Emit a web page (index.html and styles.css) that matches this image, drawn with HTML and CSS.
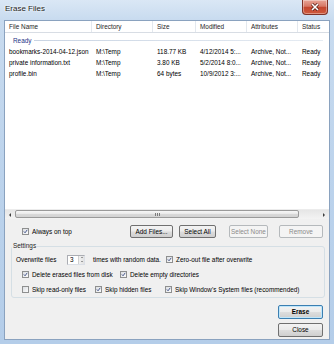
FILE: index.html
```html
<!DOCTYPE html>
<html lang="en">
<head>
    <meta charset="UTF-8">
    <title>Erase Files</title>
    <link rel="stylesheet" href="styles.css">
</head>
<body>
    <div class="window">
        <div class="titlebar">
            <span class="title">Erase Files</span>
            <span class="close-btn">
                <svg width="10" height="8" viewBox="0 0 10 8">
                    <path d="M2 1 L8 7 M8 1 L2 7" stroke="#5a1d14" stroke-width="3" fill="none"/>
                    <path d="M2 1 L8 7 M8 1 L2 7" stroke="#fff" stroke-width="1.6" fill="none"/>
                </svg>
            </span>
        </div>

        <div class="client">
            <!-- ファイル一覧 -->
            <div class="listview">
                <div class="lv-header">
                    <div class="col c1">File Name</div>
                    <div class="col c2">Directory</div>
                    <div class="col c3">Size</div>
                    <div class="col c4">Modified</div>
                    <div class="col c5">Attributes</div>
                    <div class="col c6">Status</div>
                </div>
                <div class="lv-body">
                    <div class="group"><span>Ready</span><i class="group-line"></i></div>
                    <div class="row">
                        <div class="col c1">bookmarks-2014-04-12.json</div>
                        <div class="col c2">M:\Temp</div>
                        <div class="col c3">118.77 KB</div>
                        <div class="col c4">4/12/2014 5:...</div>
                        <div class="col c5">Archive, Not...</div>
                        <div class="col c6">Ready</div>
                    </div>
                    <div class="row">
                        <div class="col c1">private information.txt</div>
                        <div class="col c2">M:\Temp</div>
                        <div class="col c3">3.80 KB</div>
                        <div class="col c4">5/2/2014 8:0...</div>
                        <div class="col c5">Archive, Not...</div>
                        <div class="col c6">Ready</div>
                    </div>
                    <div class="row">
                        <div class="col c1">profile.bin</div>
                        <div class="col c2">M:\Temp</div>
                        <div class="col c3">64 bytes</div>
                        <div class="col c4">10/9/2012 3:...</div>
                        <div class="col c5">Archive, Not...</div>
                        <div class="col c6">Ready</div>
                    </div>
                </div>
                <div class="hscroll">
                    <span class="sb-arrow"><i class="tri-left"></i></span>
                    <span class="sb-thumb"><i></i><i></i><i></i></span>
                    <span class="sb-track"></span>
                    <span class="sb-arrow"><i class="tri-right"></i></span>
                </div>
            </div>

            <div class="controls">
                <div class="top-row">
                    <label class="check"><span class="chk"><svg viewBox="0 0 7 7"><path d="M1.2 3.4 L2.9 5.3 L5.9 1.2"/></svg></span>Always on top</label>
                    <div class="btns">
                        <button class="btn btn-add">Add Files...</button>
                        <button class="btn btn-all">Select All</button>
                        <button class="btn btn-none" disabled>Select None</button>
                        <button class="btn btn-remove" disabled>Remove</button>
                    </div>
                </div>

                <fieldset class="settings">
                    <legend>Settings</legend>
                    <div class="set-row first">
                        <span class="lbl-overwrite">Overwrite files</span>
                        <span class="spin">
                            <span class="spin-val">3</span>
                            <span class="spin-btns"><i class="tri-up"></i><i class="tri-down"></i></span>
                        </span>
                        <span class="lbl-times">times with random data.</span>
                        <label class="check"><span class="chk"><svg viewBox="0 0 7 7"><path d="M1.2 3.4 L2.9 5.3 L5.9 1.2"/></svg></span>Zero-out file after overwrite</label>
                    </div>
                    <div class="set-row">
                        <label class="check w98"><span class="chk"><svg viewBox="0 0 7 7"><path d="M1.2 3.4 L2.9 5.3 L5.9 1.2"/></svg></span>Delete erased files from disk</label>
                        <label class="check"><span class="chk"><svg viewBox="0 0 7 7"><path d="M1.2 3.4 L2.9 5.3 L5.9 1.2"/></svg></span>Delete empty directories</label>
                    </div>
                    <div class="set-row">
                        <label class="check w73"><span class="chk"></span>Skip read-only files</label>
                        <label class="check w70"><span class="chk"><svg viewBox="0 0 7 7"><path d="M1.2 3.4 L2.9 5.3 L5.9 1.2"/></svg></span>Skip hidden files</label>
                        <label class="check"><span class="chk"><svg viewBox="0 0 7 7"><path d="M1.2 3.4 L2.9 5.3 L5.9 1.2"/></svg></span>Skip Window's System files (recommended)</label>
                    </div>
                </fieldset>

                <div class="actions">
                    <button class="btn btn-big btn-default">Erase</button>
                    <button class="btn btn-big">Close</button>
                </div>
            </div>
        </div>
    </div>
</body>
</html>
```

FILE: styles.css
```css
* {
    box-sizing: border-box;
}
body {
    margin: 0;
    font-family: "Liberation Sans", Arial, sans-serif;
    font-size: 6.4px;
    color: #000;
}
.window {
    width: 334px;
    height: 344px;
    display: flex;
    flex-direction: column;
    padding: 0 4px 4px;
    background: linear-gradient(#dae7f5, #c8dbef 20px, #bcd3ec 50%, #b4cde9);
}
.titlebar {
    height: 20px;
    display: flex;
    justify-content: space-between;
    align-items: flex-start;
}
.title {
    padding: 4px 0 0 1px;
    font-size: 8px;
    line-height: 9px;
    color: #1a1a1a;
    text-shadow: 0 0 3px #fff, 0 0 2px #fff;
}
.close-btn {
    width: 26px;
    height: 15px;
    margin-right: 2px;
    display: flex;
    align-items: center;
    justify-content: center;
    border: 1px solid #7e3227;
    border-top: none;
    border-radius: 0 0 4px 4px;
    background: linear-gradient(#e8a597, #d77866 45%, #c4462f 52%, #cf5a3c 100%);
    box-shadow: inset 0 0 0 1px rgba(255, 255, 255, 0.35);
}
.client {
    flex: 1;
    display: flex;
    flex-direction: column;
    border: 1px solid #8aa2bf;
    background: #f0f0f0;
}

/* list view */
.listview {
    height: 198px;
    display: flex;
    flex-direction: column;
    background: #fff;
}
.lv-header {
    height: 12px;
    display: flex;
    border-bottom: 1px solid #d8dde4;
    color: #1e1e1e;
}
.lv-header .col {
    border-right: 1px solid #e3e8ee;
}
.col {
    padding-left: 4px;
    line-height: 11px;
    white-space: nowrap;
    overflow: hidden;
}
.c1 { width: 87px; }
.c2 { width: 61px; }
.c3 { width: 43px; }
.c4 { width: 51px; }
.c5 { width: 51px; }
.c6 { flex: 1; border-right: none !important; }
.lv-body {
    flex: 1;
}
.group {
    height: 13px;
    display: flex;
    align-items: center;
    padding: 1px 6px 0 8px;
    color: #1e3287;
}
.group-line {
    flex: 1;
    height: 1px;
    margin-left: 3px;
    background: linear-gradient(to right, #c9d4e3, #e6ecf3);
}
.row {
    height: 11px;
    display: flex;
}
.hscroll {
    height: 10px;
    display: flex;
    background: linear-gradient(#e6e6e6, #f3f3f3);
    border-top: 1px solid #ececec;
}
.sb-arrow {
    width: 10px;
    display: flex;
    align-items: center;
    justify-content: center;
}
.tri-left, .tri-right, .tri-up, .tri-down {
    width: 0;
    height: 0;
    border-style: solid;
}
.tri-left {
    border-width: 2px 2px 2px 0;
    border-color: transparent #3e3e3e transparent transparent;
}
.tri-right {
    border-width: 2px 0 2px 2px;
    border-color: transparent transparent transparent #3e3e3e;
}
.sb-thumb {
    width: 284px;
    margin: 0 0 1px;
    display: flex;
    align-items: center;
    justify-content: center;
    gap: 1px;
    border: 1px solid #9a9a9a;
    border-radius: 2px;
    background: linear-gradient(#f7f7f7, #e9e9e9 50%, #d9d9d9 51%, #d3d3d3);
}
.sb-thumb i {
    width: 1px;
    height: 3px;
    background: #7c7c7c;
}
.sb-track {
    flex: 1;
}

/* controls */
.controls {
    flex: 1;
    display: flex;
    flex-direction: column;
}
.top-row {
    height: 13px;
    margin-top: 6px;
    display: flex;
    align-items: center;
    padding: 0 6px 0 17px;
}
.check {
    display: inline-flex;
    align-items: center;
    gap: 3px;
    white-space: nowrap;
}
.chk {
    width: 7px;
    height: 7px;
    flex: none;
    border: 1px solid #8e8f8f;
    background: linear-gradient(135deg, #dcdfe3, #fbfbfb);
}
.chk svg {
    display: block;
    width: 5px;
    height: 5px;
}
.chk path {
    fill: none;
    stroke: #3c4f86;
    stroke-width: 1.3;
}
.btns {
    margin-left: auto;
    display: flex;
}
.btn {
    height: 13px;
    padding: 0;
    border: 1px solid #707070;
    border-radius: 2px;
    background: linear-gradient(#f3f3f3, #ebebeb 48%, #dddddd 52%, #cfcfcf);
    font: inherit;
    line-height: 11px;
    color: #000;
    text-align: center;
}
.btn:disabled {
    border-color: #b5b9bc;
    background: #f4f4f4;
    color: #8a8a8a;
}
.btn-add { width: 43px; }
.btn-all { width: 37px; margin-left: 6px; }
.btn-none { width: 39px; margin-left: 13px; }
.btn-remove { width: 44px; margin-left: 11px; }

.settings {
    margin: 4px 4px 0 6px;
    padding: 2px 0 0;
    min-width: 0;
    border: 1px solid #d5dfe5;
    border-radius: 3px;
}
.settings legend {
    padding: 0 1px;
    line-height: 8px;
    color: #1e1e1e;
}
.set-row {
    height: 15px;
    display: flex;
    align-items: center;
    padding-left: 10px;
}
.set-row.first {
    padding-left: 4px;
}
.lbl-overwrite {
    width: 51px;
}
.spin {
    width: 18px;
    height: 10px;
    display: flex;
    border: 1px solid #abadb3;
    border-bottom-color: #dbdfe6;
    border-right-color: #dbdfe6;
    background: #fff;
}
.spin-val {
    flex: 1;
    padding-left: 2px;
    line-height: 8px;
}
.spin-btns {
    width: 6px;
    display: flex;
    flex-direction: column;
    align-items: center;
    justify-content: space-around;
    background: linear-gradient(to right, #f1f1f1, #e2e2e2);
    border-left: 1px solid #d0d0d0;
}
.tri-up {
    border-width: 0 1.5px 1.5px;
    border-color: transparent transparent #4a4a4a;
}
.tri-down {
    border-width: 1.5px 1.5px 0;
    border-color: #4a4a4a transparent transparent;
}
.lbl-times {
    width: 73px;
    margin-left: 8px;
}
.w98 { width: 98px; }
.w73 { width: 73px; }
.w70 { width: 70px; }

.actions {
    margin-top: 7px;
    padding-right: 6px;
    display: flex;
    flex-direction: column;
    align-items: flex-end;
    gap: 4px;
}
.btn-big {
    width: 45px;
    height: 14px;
    line-height: 12px;
}
.btn-default {
    border-color: #3c7fb1;
    box-shadow: inset 0 0 0 1px #bfe6fb;
    font-weight: bold;
}
```
